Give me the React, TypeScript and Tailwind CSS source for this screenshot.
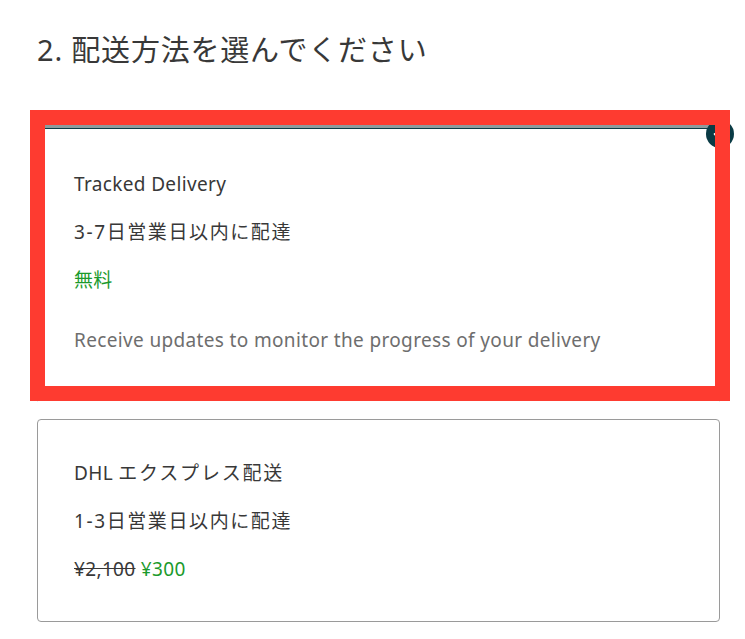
import { Check } from 'lucide-react';

interface Option {
  id: string;
  name: React.ReactNode;
  eta: string;
  price: React.ReactNode;
  note?: string;
}

const options: Option[] = [
  {
    id: 'tracked',
    name: 'Tracked Delivery',
    eta: '3-7日営業日以内に配達',
    price: <span className="text-[#1b9a2c]">無料</span>,
    note: 'Receive updates to monitor the progress of your delivery',
  },
  {
    id: 'dhl',
    name: (
      <>
        DHL <span className="tracking-[1.8px]">エクスプレス配送</span>
      </>
    ),
    eta: '1-3日営業日以内に配達',
    price: (
      <>
        <span className="line-through">¥2,100</span> <span className="text-[#1b9a2c]">¥300</span>
      </>
    ),
  },
];

export default function App() {
  const selected = 'tracked';

  return (
    <div
      className="relative min-h-[639px] bg-white pl-[37px] pr-[25px] pt-[32px] text-[#383838]"
      style={{ fontFamily: '"Noto Sans", "Noto Sans CJK JP", sans-serif' }}
    >
      <h2 className="text-[29px] leading-[36px] tracking-[0.8px]">2. 配送方法を選んでください</h2>

      <div className="mt-[56px] flex flex-col gap-[16px]">
        {options.map((option) => {
          const active = option.id === selected;
          return (
            <div
              key={option.id}
              className={
                active
                  ? 'relative rounded-[4px] border-t-[4px] border-[#8c9b9d] px-[37px] pb-[51px] pt-[44px] shadow-[inset_0_1px_0_#0a3b45]'
                  : 'relative rounded-[4px] border border-[#9a9a9a] px-[36px] pb-[40px] pt-[41px]'
              }
            >
              {active && (
                <div className="absolute -right-[14px] -top-[8px] flex h-[28px] w-[28px] items-center justify-center rounded-full bg-[#0a3b45]">
                  <Check className="h-[16px] w-[16px] text-white" strokeWidth={3} />
                </div>
              )}
              <div className="flex flex-col gap-[24px] text-[19px] leading-[24px] tracking-[0.35px]">
                <p>{option.name}</p>
                <p className="tracking-[1.6px]">{option.eta}</p>
                <p>{option.price}</p>
              </div>
              {option.note && (
                <p className="mt-[36px] text-[19px] leading-[24px] tracking-[0.35px] text-[#6e6e6e]">{option.note}</p>
              )}
            </div>
          );
        })}
      </div>

      {/* highlight around the selected option */}
      <div className="pointer-events-none absolute left-[30px] top-[110px] h-[291px] w-[700px] border-[15px] border-[#fe3b30]" />
    </div>
  );
}
